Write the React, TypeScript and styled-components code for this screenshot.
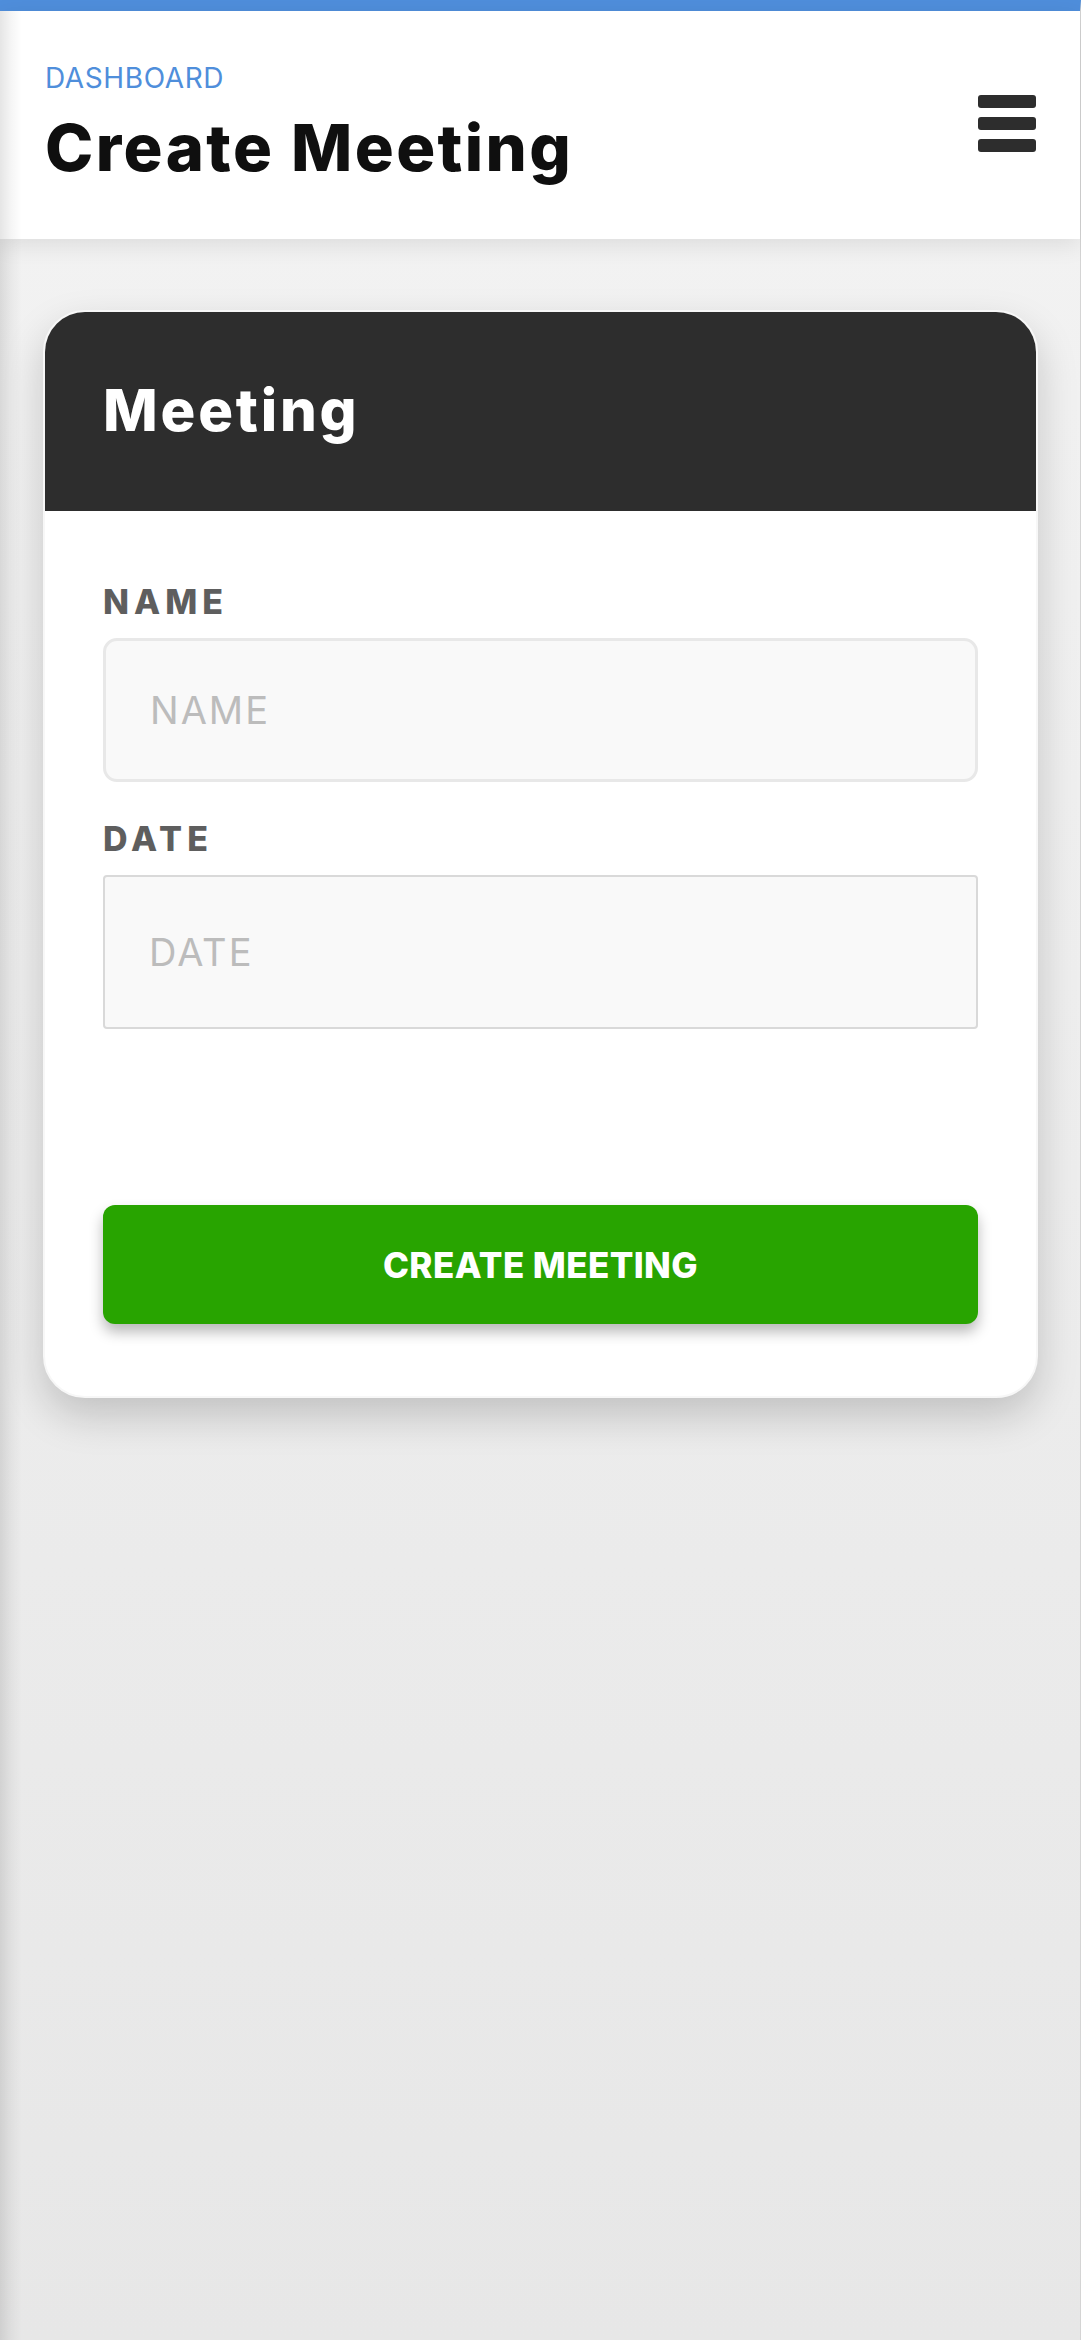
import React from "react";
import styled, { createGlobalStyle } from "styled-components";

const GlobalStyle = createGlobalStyle`
    html, body {
        margin: 0;
        padding: 0;
    }
    body {
        font-family: "Inter", "Open Sans", "Liberation Sans", sans-serif;
        background: #ececec;
    }
    * {
        box-sizing: border-box;
    }
`;

const App = () => {
    return (
        <>
            <GlobalStyle />
            <Page>
                <EdgeShade />
                <Header>
                    <TitleBox>
                        <Crumb>DASHBOARD</Crumb>
                        <PageTitle>Create Meeting</PageTitle>
                    </TitleBox>
                    <MenuButton aria-label="menu">
                        <MenuBar />
                        <MenuBar />
                        <MenuBar />
                    </MenuButton>
                </Header>
                <Content>
                    <Card>
                        <CardHead>
                            <CardTitle>Meeting</CardTitle>
                        </CardHead>
                        <CardBody>
                            <Field>
                                <Label>NAME</Label>
                                <Input placeholder="NAME" type="text" />
                            </Field>
                            <Field>
                                <Label>DATE</Label>
                                <Input placeholder="DATE" type="text" $square />
                            </Field>
                            <Submit>CREATE MEETING</Submit>
                        </CardBody>
                    </Card>
                </Content>
            </Page>
        </>
    );
};

const Page = styled.div`
    position: relative;
    min-height: 100vh;
    background: linear-gradient(180deg, #f3f3f3 0%, #ededed 50%, #e7e7e7 100%);
    border-top: 11px solid #4f8edb;
    border-right: 1px solid #d4d4d4;
`;

const EdgeShade = styled.div`
    position: absolute;
    left: 0;
    top: 0;
    bottom: 0;
    width: 22px;
    background: linear-gradient(90deg, rgba(0, 0, 0, 0.1) 0%, rgba(0, 0, 0, 0.04) 50%, rgba(0, 0, 0, 0) 100%);
    pointer-events: none;
    z-index: 5;
`;

const Header = styled.header`
    background: #ffffff;
    height: 228px;
    padding: 47px 44px 0 45px;
    display: flex;
    justify-content: space-between;
    align-items: flex-start;
    box-shadow: 0 6px 22px rgba(0, 0, 0, 0.09);
    position: relative;
    z-index: 2;
`;

const TitleBox = styled.div`
    display: flex;
    flex-direction: column;
    gap: 12px;
`;

const Crumb = styled.span`
    font-size: 28px;
    line-height: 40px;
    color: #4f8edb;
    font-weight: 400;
    letter-spacing: 0.6px;
`;

const PageTitle = styled.h1`
    margin: 0;
    font-size: 65px;
    line-height: 76px;
    font-weight: 800;
    color: #0f0f0f;
    letter-spacing: 2.4px;
`;

const MenuButton = styled.button`
    margin-top: 37px;
    width: 58px;
    background: none;
    border: none;
    padding: 0;
    display: flex;
    flex-direction: column;
    gap: 9px;
    cursor: pointer;
`;

const MenuBar = styled.span`
    display: block;
    width: 58px;
    height: 13px;
    border-radius: 3px;
    background: #2d2d2d;
`;

const Content = styled.main`
    padding: 71px 42px 40px 43px;
`;

const Card = styled.section`
    background: #ffffff;
    border: 2px solid #f7f7f7;
    border-radius: 42px;
    overflow: hidden;
    box-shadow: 0 18px 40px rgba(0, 0, 0, 0.18);
`;

const CardHead = styled.div`
    background: #2d2d2d;
    height: 199px;
    padding: 0 58px 4px;
    display: flex;
    align-items: center;
`;

const CardTitle = styled.h2`
    margin: 0;
    font-size: 58px;
    font-weight: 800;
    color: #ffffff;
    letter-spacing: 2.8px;
`;

const CardBody = styled.div`
    padding: 71px 58px 72px;
    display: flex;
    flex-direction: column;
`;

const Field = styled.div`
    display: flex;
    flex-direction: column;
    gap: 16px;
    margin-bottom: 37px;
`;

const Label = styled.label`
    font-size: 34px;
    line-height: 40px;
    font-weight: 800;
    letter-spacing: 5px;
    color: #5e5e5e;
`;

const Input = styled.input<{ $square?: boolean }>`
    width: 100%;
    height: ${props => (props.$square ? "154px" : "144px")};
    border: ${props => (props.$square ? "2px solid #d9d9d9" : "3px solid #e8e8e8")};
    border-radius: ${props => (props.$square ? "4px" : "14px")};
    background: #f9f9f9;
    padding: 0 44px;
    font-family: inherit;
    font-size: 38px;
    letter-spacing: 2px;
    color: #333;
    outline: none;

    &::placeholder {
        color: #bcbcbc;
    }
`;

const Submit = styled.button`
    margin-top: 139px;
    height: 119px;
    border: none;
    border-radius: 12px;
    background: #28a400;
    color: #ffffff;
    font-family: inherit;
    font-size: 35px;
    font-weight: 800;
    letter-spacing: 0.4px;
    box-shadow: 0 8px 14px rgba(0, 0, 0, 0.28);
    cursor: pointer;
`;

export default App;
